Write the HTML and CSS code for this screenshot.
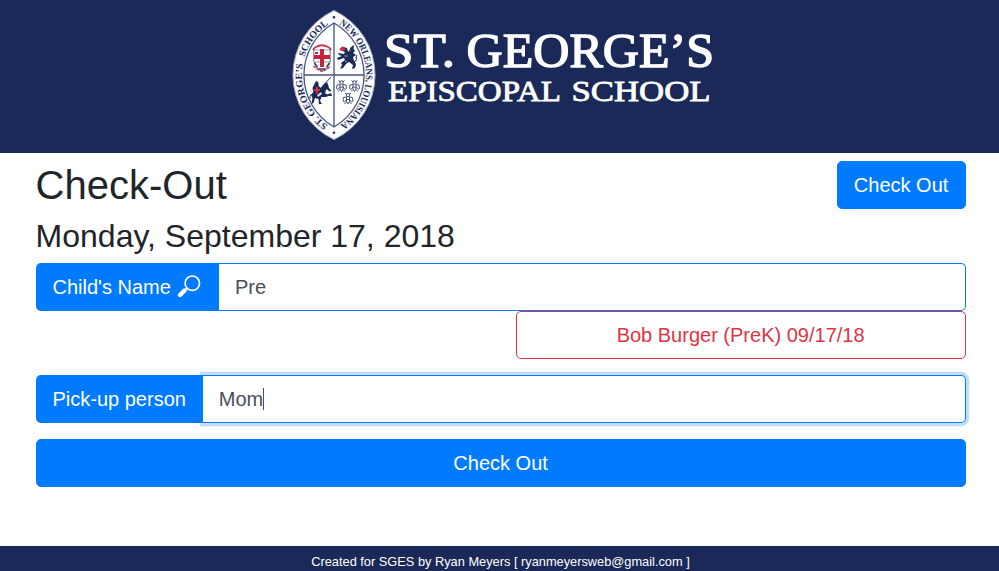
FILE: index.html
```html
<!DOCTYPE html>
<html lang="en">
<head>
<meta charset="utf-8">
<title>Check-Out</title>
<link rel="stylesheet" href="styles.css">
</head>
<body>
<header class="banner">
<svg class="logo" viewBox="285 5 435 140" role="img" aria-label="St. George's Episcopal School">
  <defs>
    <path id="arc-left" d="M334 129A61.500 61.500 0 0 1 334 21"/>
    <path id="arc-right" d="M334 21A61.500 61.500 0 0 1 334 129"/>
    <g id="bee" fill="none" stroke="#33436b" stroke-width=".9">
      <path d="M-1.500-1.500L-4.500-1L-5 2.500L-3.500 3.500L-1.500 1M1.500-1.500L4.500-1L5 2.500L3.500 3.500L1.500 1M-1.500-2V3L0 5.500L1.500 3V-2M-3.500 5.500L-1.500 3.500M3.500 5.500L1.500 3.500M-1.500 1H1.500M-3-5.500L-1-4M3-5.500L1-4"/>
      <circle cy="-3.500" r="1.700"/>
    </g>
  </defs>
  <path class="shield" d="M334 10.500A71.200 71.200 0 0 1 334 139.500A71.200 71.200 0 0 1 334 10.500Z"/>
  <path class="frame" d="M334 23A60 60 0 0 1 334 127A60 60 0 0 1 334 23ZM334 23V127M304.500 75H363.500"/>
  <circle class="ink" cx="334" cy="17.300" r="1.200"/>
  <circle class="ink" cx="334" cy="132.700" r="1.200"/>
  <text class="motto"><textPath href="#arc-left" startOffset="7" textLength="70" lengthAdjust="spacingAndGlyphs">ST. GEORGE’S</textPath></text>
  <text class="motto"><textPath href="#arc-left" startOffset="84" textLength="41" lengthAdjust="spacingAndGlyphs">SCHOOL</textPath></text>
  <text class="motto"><textPath href="#arc-right" startOffset="6" textLength="118" lengthAdjust="spacingAndGlyphs">NEW ORLEANS, LOUISIANA</textPath></text>

  <path d="M314 48V60Q314 67 322 71Q330 67 330 60V48" fill="#fff" stroke="#8e98ad" stroke-width="1.400"/>
  <path d="M313 50Q313.500 48 316 47Q322 43.500 328 47Q330.500 48 331 50" fill="none" stroke="#c5354a" stroke-width="1.800"/>
  <path d="M314 50H330V62H314Z" fill="#fff" stroke="#6d7890" stroke-width=".7"/>
  <path d="M320 49H324V55H330V59H324V67H320V59H314V55H320Z" fill="#c8233b"/>
  <path d="M315 53H318" stroke="#c8233b" stroke-width="2"/>
  <path d="M313.500 66L317 69L322 71.500L327 69L330.500 66" fill="none" stroke="#c5354a" stroke-width="1.400" stroke-dasharray="3 1"/>
  <path d="M314.500 63L317.500 67M329.500 63L326.500 67M319 69H325" stroke="#35446b" stroke-width="1.400"/>

  <g class="ink">
    <path d="M340 50L342 46.500L347 48L348 52L351 47L354 45L353.500 49L355 51L353 53L356 55L353 57L354 61L356 64L355 68L352 69L353 65L349 62L346 64L343 68L340 69L342 65L341 63L345 60L344 58L338 60L337 58L342 56L339 55L338 53L344 54L345 52Z"/>
    <path d="M351 61Q358 63 356 57L357 55" fill="none" stroke="#1b2958"/>
  </g>
  <path d="M339 49L343 46.500L346 49.500L342 51Z" fill="#d32e45"/>
  <path d="M344 56L348 56M349 51L351 50M345 62L347 61" stroke="#aab4ca" stroke-width=".8"/>

  <g class="ink">
    <path d="M314.500 84L316 81L319 82.500L318.500 86L321 88L324 84L327 82L328 84.500L329 88L331.500 91L329.500 91.500L326.500 89L325 93L327.500 94.500L331 93L332 96L329 96L325.500 97L321.500 97L320 101L322 104H319L318.500 99L315 98L313.500 103L311.500 104L312.500 98L311 95L313.500 92L312.500 88Z"/>
    <path d="M314 94Q309 94 310 99M321 88L331 77" fill="none" stroke="#1b2958" stroke-width=".9"/>
  </g>
  <path d="M318 82L320 83.500L318 84ZM317 95L321 92L322 94L318 97Z" fill="#d5dae5"/>
  <path d="M316 87H318V89H320V91H318V93.500H316V91H314V89H316Z" fill="#d32e45"/>
  <use href="#bee" x="341.500" y="86"/>
  <use href="#bee" x="354.500" y="86"/>
  <use href="#bee" x="348" y="98.500"/>
  <text class="name" x="384" y="67" font-size="47.500" textLength="71" lengthAdjust="spacingAndGlyphs">ST.</text>
  <text class="name" x="466.500" y="67" font-size="47.500" textLength="247.500" lengthAdjust="spacingAndGlyphs">GEORGE’S</text>
  <text class="name sub" x="388" y="101" font-size="30" textLength="173" lengthAdjust="spacingAndGlyphs">EPISCOPAL</text>
  <text class="name sub" x="571.500" y="101" font-size="30" textLength="139" lengthAdjust="spacingAndGlyphs">SCHOOL</text>
</svg>
</header>
<main class="content">
  <div class="heading">
    <h1>Check-Out</h1>
    <button class="btn" type="button">Check Out</button>
  </div>
  <h2>Monday, September 17, 2018</h2>
  <div class="group child">
    <label class="label" for="child">Child's Name
      <svg class="search" viewBox="0 0 24 24" aria-hidden="true"><circle cx="15.300" cy="8.200" r="7.200" fill="none" stroke="#fff" stroke-width="1.700"/><path d="M10.300 13.200L8.200 15.300" stroke="#fff" stroke-width="1.800"/><path d="M7.500 15.500L3 20" stroke="#fff" stroke-width="4.400" stroke-linecap="round"/></svg>
    </label>
    <input id="child" class="field" value="Pre">
  </div>
  <div class="results"><button class="result" type="button">Bob Burger (PreK) 09/17/18</button></div>
  <div class="group pickup">
    <label class="label">Pick-up person</label>
    <div class="field focused" role="textbox">Mom<span class="caret"></span></div>
  </div>
  <button class="btn wide" type="button">Check Out</button>
</main>
<footer class="footer">Created for SGES by Ryan Meyers [ ryanmeyersweb@gmail.com ]</footer>
</body>
</html>
```
FILE: styles.css
```css
* { box-sizing: border-box; }
body {
  margin: 0;
  height: 571px;
  display: flex;
  flex-direction: column;
  overflow: hidden;
  background: #fff;
  color: #212529;
  font: 16px/1.5 "Liberation Sans", Arial, sans-serif;
}
.banner { height: 153px; padding: 5px 0 0 285px; background: #1b2958; flex: none; }
.logo { display: block; width: 435px; height: 140px; }
.shield { fill: #fafbfd; stroke: #a9b1c6; stroke-width: 1; }
.frame { fill: #fff; stroke: #46557d; stroke-width: 1.3; }
.ink { fill: #1b2958; }
.motto { font: bold 9.6px "Liberation Serif", serif; fill: #1b2958; }
.name { font-family: "Liberation Serif", serif; fill: #fff; stroke: #fff; stroke-width: 1.4; }
.sub { stroke-width: .8; }
.content { flex: 1; padding: 8px 33.4px 0 35.6px; }
.heading { display: flex; justify-content: space-between; height: 48px; }
h1, h2 { margin: 0; line-height: 1.2; font-weight: 400; }
h1 { font-size: 40px; }
h2 { margin: 8px 0; height: 38px; font-size: 32px; }
.btn, .result {
  height: 48px;
  padding: 8px 16px;
  border: 1px solid #007bff;
  border-radius: 5px;
  background: #007bff;
  color: #fff;
  font: 20px/30px "Liberation Sans", Arial, sans-serif;
}
.btn { min-width: 129px; }
.wide { display: block; width: 100%; }
.group { display: flex; height: 48px; }
.label {
  display: flex;
  align-items: center;
  width: 183.4px;
  padding: 0 0 0 16.9px;
  border-radius: 5px 0 0 5px;
  background: #007bff;
  color: #fff;
  font-size: 20px;
  white-space: nowrap;
}
.search { width: 24px; height: 24px; margin-left: 6px; }
.field {
  flex: 1;
  min-width: 0;
  height: 48px;
  padding: 8px 16px;
  border: 1px solid #007bff;
  border-left: 0;
  border-radius: 0 5px 5px 0;
  outline: 0;
  background: #fff;
  color: #495057;
  font: 20px/30px "Liberation Sans", Arial, sans-serif;
}
.results { display: flex; justify-content: flex-end; margin-bottom: 16px; }
.result { width: 450px; border-color: #dc3545; background: #fff; color: #dc3545; }
.pickup { margin-bottom: 16px; }
.pickup .label { width: 167.2px; }
.focused {
  display: flex;
  align-items: center;
  box-shadow: 0 0 0 3.2px rgba(0, 123, 255, .25);
}
.caret { width: 1px; height: 22px; background: #495057; }
.footer {
  height: 25px;
  flex: none;
  padding: 0 0 0 2px;
  background: #1b2958;
  color: #fff;
  font-size: 12.8px;
  line-height: 32px;
  text-align: center;
}
```
